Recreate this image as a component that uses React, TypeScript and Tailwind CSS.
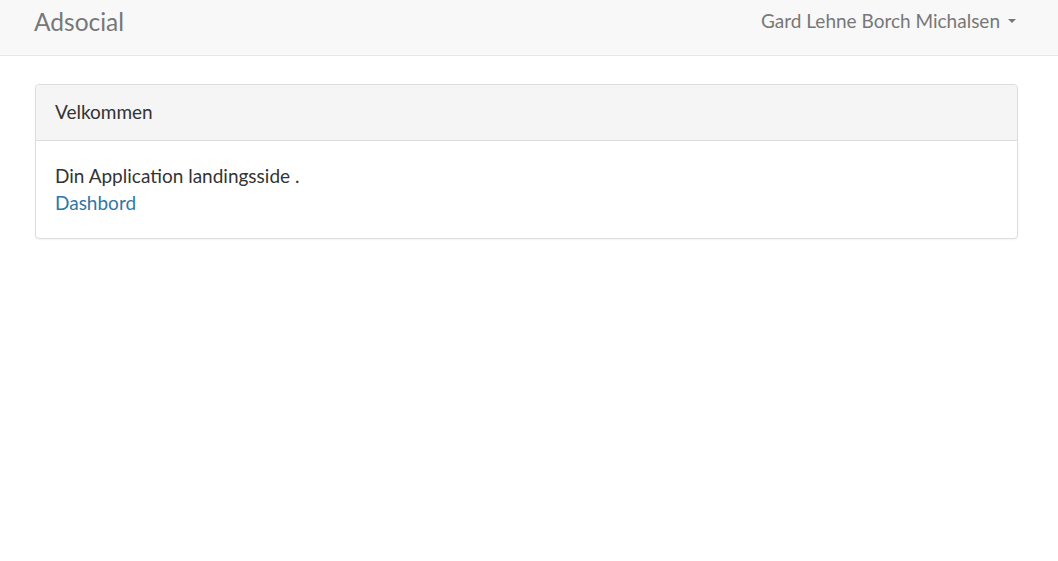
import React from 'react';

const App: React.FC = () => {
  return (
    <div className="min-h-[561px] bg-white" style={{ fontFamily: 'Lato, "Open Sans", sans-serif' }}>
      {/* Navbar */}
      <nav className="h-[56px] bg-[#f8f8f8] border-b border-[#e7e7e7] flex items-start justify-between pl-[34px] pr-[42px]">
        <a className="mt-[10px] text-[24.5px] text-[#777] leading-[24px]">Adsocial</a>
        <div className="mt-[9px] flex items-center gap-[8px] text-[19px] leading-[24px] text-[#777]">
          <span>Gard Lehne Borch Michalsen</span>
          <span className="w-0 h-0 border-l-[4px] border-r-[4px] border-t-[4px] border-l-transparent border-r-transparent border-t-[#777]" />
        </div>
      </nav>

      {/* Panel */}
      <div className="pl-[35px] pr-[40px] pt-[28px]">
        <div className="border border-[#ddd] rounded-[4px] shadow-[0_1px_2px_rgba(0,0,0,0.05)] bg-white">
          <div className="h-[56px] bg-[#f5f5f5] border-b border-[#ddd] rounded-t-[4px] flex items-center px-[19px] text-[19px] text-[#333]">
            Velkommen
          </div>
          <div className="px-[19px] pt-[21px] pb-[22px] text-[19px] leading-[27px] text-[#333]">
            <div>Din Application landingsside .</div>
            <a className="text-[#2f77a8]">Dashbord</a>
          </div>
        </div>
      </div>
    </div>
  );
};

export default App;
